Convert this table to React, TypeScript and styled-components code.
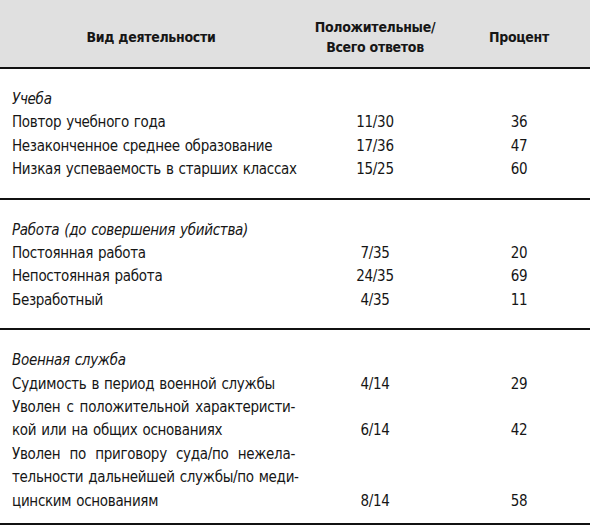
import React from 'react';
import styled, { createGlobalStyle } from 'styled-components';

const GlobalStyle = createGlobalStyle`
  html, body {
    margin: 0;
    padding: 0;
    background: #ffffff;
  }
  body {
    font-family: "Liberation Sans Narrow", "DejaVu Sans Condensed", "DejaVu Sans", sans-serif;
    font-stretch: condensed;
    color: #161616;
  }
`;

type Item = {
  lines: { text: string; justify?: boolean }[];
  ratio: string;
  percent: string;
};

type Section = {
  title: string;
  items: Item[];
};

const sections: Section[] = [
  {
    title: 'Учеба',
    items: [
      { lines: [{ text: 'Повтор учебного года' }], ratio: '11/30', percent: '36' },
      { lines: [{ text: 'Незаконченное среднее образование' }], ratio: '17/36', percent: '47' },
      { lines: [{ text: 'Низкая успеваемость в старших классах' }], ratio: '15/25', percent: '60' },
    ],
  },
  {
    title: 'Работа (до совершения убийства)',
    items: [
      { lines: [{ text: 'Постоянная работа' }], ratio: '7/35', percent: '20' },
      { lines: [{ text: 'Непостоянная работа' }], ratio: '24/35', percent: '69' },
      { lines: [{ text: 'Безработный' }], ratio: '4/35', percent: '11' },
    ],
  },
  {
    title: 'Военная служба',
    items: [
      { lines: [{ text: 'Судимость в период военной службы' }], ratio: '4/14', percent: '29' },
      {
        lines: [
          { text: 'Уволен с положительной характеристи-', justify: true },
          { text: 'кой или на общих основаниях' },
        ],
        ratio: '6/14',
        percent: '42',
      },
      {
        lines: [
          { text: 'Уволен по приговору суда/по нежела-', justify: true },
          { text: 'тельности дальнейшей службы/по меди-', justify: true },
          { text: 'цинским основаниям' },
        ],
        ratio: '8/14',
        percent: '58',
      },
    ],
  },
];

const App = () => {
  return (
    <>
      <GlobalStyle />
      <Table>
        <Header>
          <HeadCell>Вид деятельности</HeadCell>
          <HeadCell>
            Положительные/
            <br />
            Всего ответов
          </HeadCell>
          <HeadCell>Процент</HeadCell>
        </Header>
        {sections.map((section) => (
          <Group key={section.title}>
            <Row>
              <GroupTitle>{section.title}</GroupTitle>
            </Row>
            {section.items.map((item) => (
              <Row key={item.lines[0].text}>
                <Label>
                  {item.lines.map((line) => (
                    <Line key={line.text} $justify={line.justify}>
                      {line.text}
                    </Line>
                  ))}
                </Label>
                <Value>{item.ratio}</Value>
                <Value>{item.percent}</Value>
              </Row>
            ))}
          </Group>
        ))}
      </Table>
    </>
  );
};

export default App;

const Table = styled.div`
  width: 590px;
  display: flex;
  flex-direction: column;
`;

const Header = styled.div`
  box-sizing: border-box;
  height: 69px;
  padding-top: 7px;
  display: grid;
  grid-template-columns: 302px 146px 1fr;
  align-items: center;
  background: #e0e0e0;
  border-bottom: 2px solid #111111;
`;

const HeadCell = styled.div`
  text-align: center;
  font-size: 14px;
  font-weight: 700;
  letter-spacing: -0.3px;
  line-height: 20px;
`;

const Group = styled.div`
  padding: 19px 0 16px;
  border-bottom: 2px solid #111111;

  &:last-child {
    padding-bottom: 10px;
  }
`;

const Row = styled.div`
  display: grid;
  grid-template-columns: 302px 146px 1fr;
  font-size: 15px;
  letter-spacing: -0.3px;
  word-spacing: 1px;
  line-height: 23.4px;
`;

const GroupTitle = styled.div`
  grid-column: 1 / 2;
  padding-left: 12px;
  font-style: italic;
`;

const Label = styled.div`
  padding: 0 7px 0 12px;
`;

const Line = styled.div<{ $justify?: boolean }>`
  text-align: ${(p) => (p.$justify ? 'justify' : 'left')};
  text-align-last: ${(p) => (p.$justify ? 'justify' : 'auto')};
  white-space: nowrap;
`;

const Value = styled.div`
  align-self: end;
  text-align: center;
`;
